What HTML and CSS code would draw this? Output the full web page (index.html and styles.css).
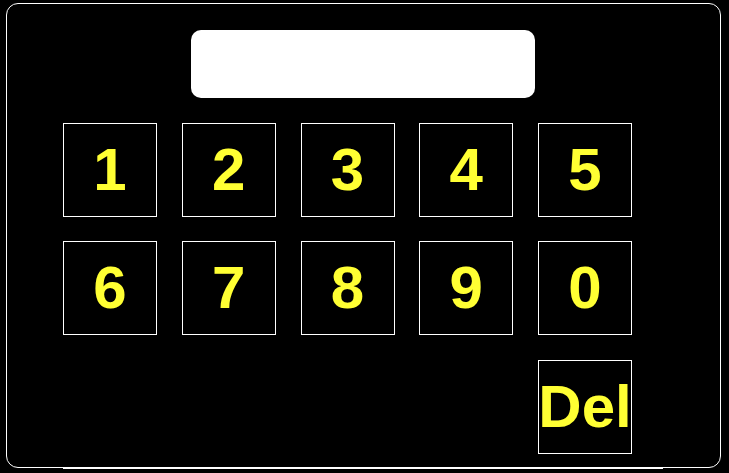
FILE: index.html
```html
<!DOCTYPE html>
<html>
<head>
<meta charset="utf-8">
<link rel="stylesheet" href="styles.css">
</head>
<body>
<div class="page">
  <div class="panel">
    <div class="display"></div>
    <div class="keypad">
      <div class="key">1</div>
      <div class="key">2</div>
      <div class="key">3</div>
      <div class="key">4</div>
      <div class="key">5</div>
      <div class="key">6</div>
      <div class="key">7</div>
      <div class="key">8</div>
      <div class="key">9</div>
      <div class="key">0</div>
      <div class="key key-del">Del</div>
    </div>
  </div>
  <div class="rule"></div>
</div>
</body>
</html>
```
FILE: styles.css
```css
html, body {
  margin: 0;
  padding: 0;
  background: #000;
}
body {
  width: 729px;
  height: 473px;
  overflow: hidden;
  font-family: "Liberation Sans", Arial, sans-serif;
}
.page {
  padding: 3px 0 0 6px;
}
.panel {
  box-sizing: border-box;
  width: 715px;
  height: 465px;
  border: 1px solid #fff;
  border-radius: 12px;
  padding-top: 26px;
}
.display {
  width: 344px;
  height: 68px;
  margin: 0 0 0 184px;
  background: #fff;
  border-radius: 10px;
}
.keypad {
  display: grid;
  grid-template-columns: repeat(5, 94px);
  grid-auto-rows: 94px;
  column-gap: 24.75px;
  row-gap: 24.4px;
  margin: 25px 0 0 56px;
}
.key {
  box-sizing: border-box;
  border: 1px solid #fff;
  display: flex;
  align-items: center;
  justify-content: center;
  color: #ffff33;
  font-weight: bold;
  font-size: 60px;
  line-height: 1;
  white-space: nowrap;
}
.key-del {
  grid-column: 5;
}
.rule {
  margin-left: 57px;
  width: 600px;
  border-top: 1px solid #fff;
}
```
